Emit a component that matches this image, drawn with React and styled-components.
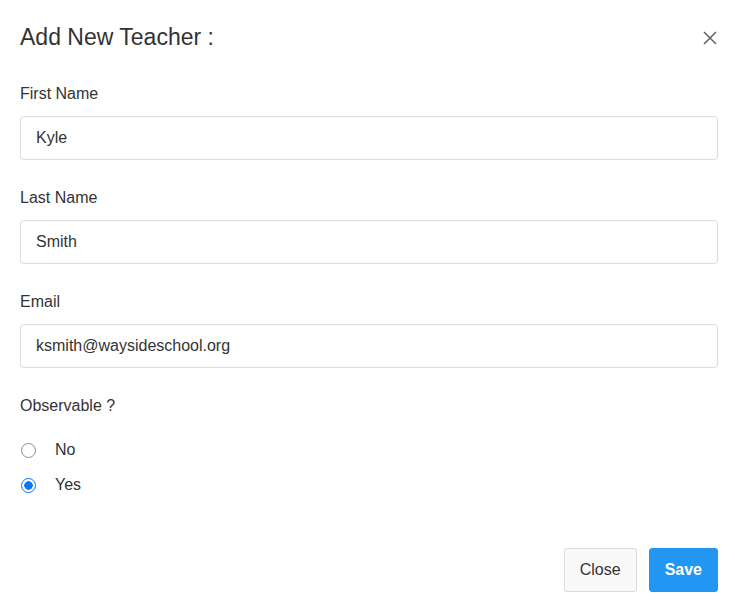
import React, { useState } from "react";
import styled, { createGlobalStyle } from "styled-components";

const Global = createGlobalStyle`
  html, body { margin: 0; padding: 0; background: #fff; }
  body { font-family: "Liberation Sans", Arial, Helvetica, sans-serif; color: #333; }
  * { box-sizing: border-box; }
`;

const Modal = styled.div`
  width: 735px;
  height: 613px;
  background: #fff;
  display: flex;
  flex-direction: column;
  padding: 0 17px 0 20px;
`;

const Header = styled.div`
  display: flex;
  align-items: center;
  justify-content: space-between;
  height: 77px;
  padding-bottom: 2px;
`;

const Title = styled.h2`
  margin: 0;
  font-size: 23px;
  font-weight: 400;
  color: #333;
`;

const CloseX = styled.button`
  border: none;
  background: none;
  padding: 0;
  width: 20px;
  height: 20px;
  display: flex;
  align-items: center;
  justify-content: center;
  margin-right: -2px;
  cursor: pointer;
`;

const Field = styled.div`
  display: flex;
  flex-direction: column;
  margin-bottom: 21px;
`;

const Label = styled.label`
  font-size: 16px;
  line-height: 22px;
  margin-top: 6px;
  margin-bottom: 11px;
  color: #333;
`;

const Input = styled.input`
  height: 44px;
  width: 100%;
  border: 1px solid #dcdcdc;
  border-radius: 4px;
  padding: 0 15px;
  font-family: inherit;
  font-size: 16px;
  color: #333;
  outline: none;
`;

const RadioGroup = styled.div`
  display: flex;
  flex-direction: column;
  gap: 13px;
  margin-top: 22px;
`;

const RadioRow = styled.label`
  display: flex;
  align-items: center;
  height: 22px;
  font-size: 16px;
  color: #333;
  cursor: pointer;
`;

const Radio = styled.input`
  appearance: none;
  margin: 0 19px 0 1px;
  width: 15px;
  height: 15px;
  border-radius: 50%;
  border: 1px solid #8a8a8a;
  background: #fff;
  &:checked {
    border: 1.5px solid #0a76f6;
    background: radial-gradient(circle, #0a76f6 0 4px, #fff 4.5px);
  }
`;

const Footer = styled.div`
  margin-top: auto;
  display: flex;
  justify-content: flex-end;
  gap: 12px;
  padding-bottom: 21px;
`;

const Button = styled.button`
  height: 44px;
  padding: 0 15px;
  border-radius: 3px;
  font-family: inherit;
  font-size: 16px;
  border: 1px solid ${(p) => (p.$primary ? "#2196f3" : "#dadada")};
  background: ${(p) => (p.$primary ? "#2196f3" : "#f9f9f9")};
  color: ${(p) => (p.$primary ? "#fff" : "#333")};
  font-weight: ${(p) => (p.$primary ? 700 : 400)};
  cursor: pointer;
`;

export default function App() {
  const [obs, setObs] = useState("yes");
  return (
    <>
      <Global />
      <Modal>
        <Header>
          <Title>Add New Teacher :</Title>
          <CloseX aria-label="close">
            <svg width="14" height="14" viewBox="0 0 14 14">
              <path d="M1 1L13 13M13 1L1 13" stroke="#666" strokeWidth="1.6" />
            </svg>
          </CloseX>
        </Header>
        <Field>
          <Label>First Name</Label>
          <Input defaultValue="Kyle" />
        </Field>
        <Field>
          <Label>Last Name</Label>
          <Input defaultValue="Smith" />
        </Field>
        <Field>
          <Label>Email</Label>
          <Input defaultValue="ksmith@waysideschool.org" />
        </Field>
        <div>
          <Label as="div">Observable ?</Label>
          <RadioGroup>
            <RadioRow>
              <Radio type="radio" name="obs" checked={obs === "no"} onChange={() => setObs("no")} />
              No
            </RadioRow>
            <RadioRow>
              <Radio type="radio" name="obs" checked={obs === "yes"} onChange={() => setObs("yes")} />
              Yes
            </RadioRow>
          </RadioGroup>
        </div>
        <Footer>
          <Button>Close</Button>
          <Button $primary>Save</Button>
        </Footer>
      </Modal>
    </>
  );
}
